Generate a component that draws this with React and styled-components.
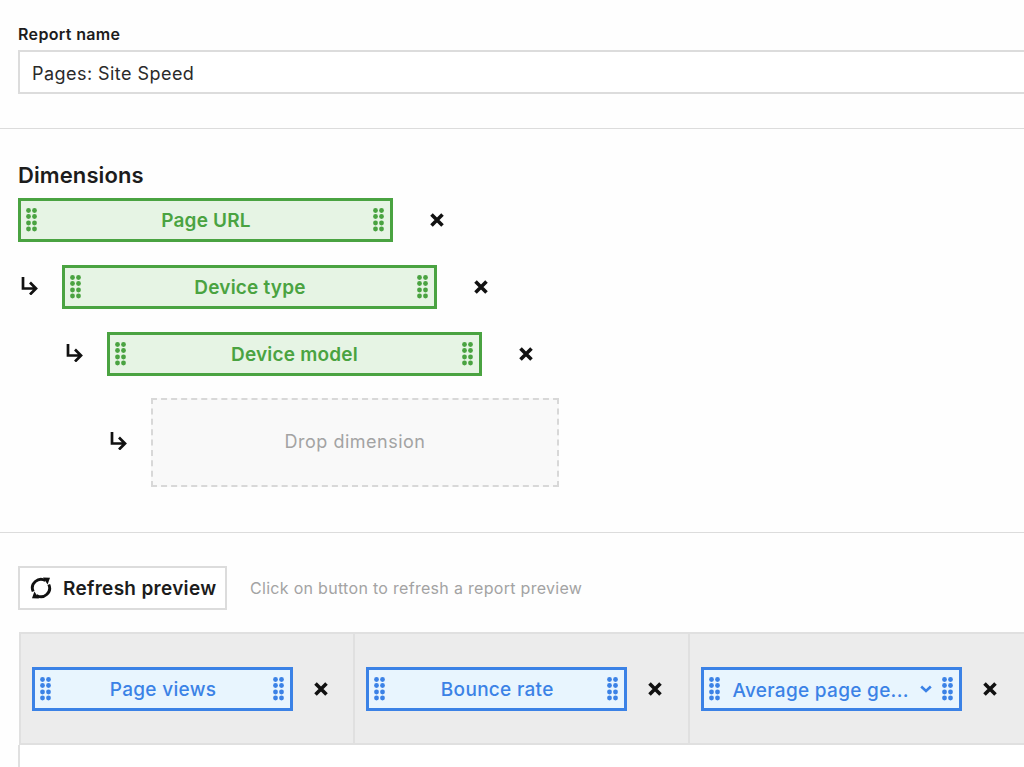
import React from 'react'
import styled, { createGlobalStyle } from 'styled-components'

const GlobalStyle = createGlobalStyle`
    html, body {
        margin: 0;
        padding: 0;
        background: #fefefe;
        overflow: hidden;
    }
    body {
        font-family: "Inter", "Liberation Sans", sans-serif;
        color: #1c1c1c;
    }
`

const Grip = ({ color }) => (
    <GripIcon width="11" height="24" viewBox="0 0 11 24" fill={color}>
        {[2.5, 8.5, 15, 21].map((y) => (
            <React.Fragment key={y}>
                <circle cx="2.5" cy={y} r="2.4" />
                <circle cx="8.5" cy={y} r="2.4" />
            </React.Fragment>
        ))}
    </GripIcon>
)

const Cross = ({ gap }) => (
    <CrossIcon gap={gap} width="16" height="16" viewBox="0 0 16 16">
        <path d="M2.5 2.5 L13.5 13.5 M13.5 2.5 L2.5 13.5" stroke="#111" strokeWidth="3.6" fill="none" />
    </CrossIcon>
)

const Arrow = () => (
    <ArrowIcon width="17" height="18" viewBox="0 0 17 18">
        <path d="M2 0 V11.5 H14 M9 5.5 L15 11.5 L9 17.5" stroke="#111" strokeWidth="2.7" fill="none" />
    </ArrowIcon>
)

const Refresh = () => (
    <svg width="22" height="22" viewBox="0 0 22 22" fill="none">
        <path d="M3.2 14.5 A8.6 8.6 0 0 1 15.5 3.6" stroke="#111" strokeWidth="2.9" />
        <path d="M18.8 7.5 A8.6 8.6 0 0 1 6.5 18.4" stroke="#111" strokeWidth="2.9" />
        <path d="M13 0.6 L20 0.8 L17.6 7.6 Z" fill="#111" />
        <path d="M9 21.4 L2 21.2 L4.4 14.4 Z" fill="#111" />
    </svg>
)

const Chevron = () => (
    <ChevronIcon width="12" height="8" viewBox="0 0 12 8">
        <path d="M1.2 1.5 L6 6 L10.8 1.5" stroke="#3b82e6" strokeWidth="2.6" fill="none" />
    </ChevronIcon>
)

function DimensionRow({ level, label }) {
    return (
        <DimRow level={level}>
            {level > 0 && <ArrowSlot><Arrow /></ArrowSlot>}
            <Chip>
                <Grip color="#4aa341" />
                <ChipLabel>{label}</ChipLabel>
                <Grip color="#4aa341" />
            </Chip>
            <Cross gap={36} />
        </DimRow>
    )
}

function MetricCell({ label, menu }) {
    return (
        <Cell>
            <MetricChip>
                <Grip color="#3b82e6" />
                <MetricLabel menu={menu}>{label}</MetricLabel>
                {menu && <Chevron />}
                <Grip color="#3b82e6" />
            </MetricChip>
            <Cross gap={20} />
        </Cell>
    )
}

export default function App() {
    return (
        <>
            <GlobalStyle />
            <Page>
                <NameSection>
                    <FieldLabel>Report name</FieldLabel>
                    <NameInput>Pages: Site Speed</NameInput>
                </NameSection>
                <DimensionSection>
                    <Heading>Dimensions</Heading>
                    <DimensionRow level={0} label="Page URL" />
                    <DimensionRow level={1} label="Device type" />
                    <DimensionRow level={2} label="Device model" />
                    <DropRow>
                        <ArrowSlot><Arrow /></ArrowSlot>
                        <DropZone>Drop dimension</DropZone>
                    </DropRow>
                </DimensionSection>
                <PreviewSection>
                    <PreviewBar>
                        <RefreshButton><Refresh />Refresh preview</RefreshButton>
                        <Hint>Click on button to refresh a report preview</Hint>
                    </PreviewBar>
                    <HeaderRow>
                        <MetricCell label="Page views" />
                        <MetricCell label="Bounce rate" />
                        <MetricCell label="Average page ge..." menu />
                    </HeaderRow>
                    <TableBody />
                </PreviewSection>
            </Page>
        </>
    )
}

const Page = styled.div`
    width: 1024px;
    height: 767px;
    overflow: hidden;
`

const NameSection = styled.div`
    height: 129px;
    box-sizing: border-box;
    padding: 25px 0 0 18px;
    border-bottom: 1px solid #dcdcdc;
`

const FieldLabel = styled.div`
    font-size: 16px;
    font-weight: 600;
    letter-spacing: 0.35px;
    line-height: 18px;
    margin-bottom: 7px;
`

const NameInput = styled.div`
    height: 44px;
    box-sizing: border-box;
    border: 2px solid #dcdcdc;
    border-right: none;
    background: #fff;
    padding-left: 12px;
    font-size: 18px;
    letter-spacing: 0.45px;
    line-height: 43px;
    color: #2a2a2a;
`

const DimensionSection = styled.div`
    height: 404px;
    box-sizing: border-box;
    padding: 33px 0 0 18px;
    border-bottom: 1px solid #dcdcdc;
`

const Heading = styled.div`
    font-size: 22px;
    font-weight: 600;
    letter-spacing: 0.1px;
    line-height: 26px;
    margin-bottom: 10px;
`

const DimRow = styled.div`
    display: flex;
    align-items: center;
    height: 44px;
    margin-bottom: 23px;
    padding-left: ${(p) => (p.level > 0 ? (p.level - 1) * 44.5 : 0)}px;
`

const ArrowSlot = styled.div`
    width: 44px;
    flex: none;
    padding-left: 3px;
    box-sizing: border-box;
    display: flex;
`

const ArrowIcon = styled.svg`
    margin-top: -3px;
`

const Chip = styled.div`
    width: 375px;
    height: 44px;
    box-sizing: border-box;
    border: 3px solid #4aa341;
    background: #e6f4e4;
    display: flex;
    align-items: center;
    padding: 0 4px 0 5px;
`

const ChipLabel = styled.div`
    flex: 1;
    text-align: center;
    color: #4aa341;
    font-size: 19px;
    font-weight: 600;
    letter-spacing: 0.2px;
`

const GripIcon = styled.svg`
    flex: none;
    margin-right: 2px;
`

const CrossIcon = styled.svg`
    flex: none;
    margin-left: ${(p) => p.gap}px;
`

const DropRow = styled.div`
    display: flex;
    align-items: center;
    margin-top: -1px;
    padding-left: 89px;
`

const DropZone = styled.div`
    width: 408px;
    height: 89px;
    box-sizing: border-box;
    border: 2px dashed #d8d8d8;
    padding-bottom: 2px;
    background: #f9f9f9;
    display: flex;
    align-items: center;
    justify-content: center;
    color: #a3a3a3;
    font-size: 18px;
    letter-spacing: 0.5px;
`

const PreviewSection = styled.div`
    padding: 33px 0 0 18px;
`

const PreviewBar = styled.div`
    display: flex;
    align-items: center;
    height: 44px;
`

const RefreshButton = styled.div`
    width: 209px;
    height: 44px;
    box-sizing: border-box;
    border: 2px solid #dcdcdc;
    background: #fff;
    display: flex;
    align-items: center;
    gap: 11px;
    padding-left: 10px;
    font-size: 19px;
    font-weight: 600;
    letter-spacing: 0.3px;
`

const Hint = styled.div`
    margin-left: 23px;
    color: #a3a3a3;
    font-size: 16px;
    letter-spacing: 0.3px;
`

const HeaderRow = styled.div`
    display: flex;
    height: 113px;
    box-sizing: border-box;
    margin-top: 22px;
    margin-left: 1px;
    background: #ececec;
    border-top: 2px solid #e0e0e0;
    border-bottom: 2px solid #e0e0e0;
`

const Cell = styled.div`
    width: 334.25px;
    flex: none;
    box-sizing: border-box;
    border-left: 2px solid #e0e0e0;
    display: flex;
    align-items: center;
    padding-left: 11px;
`

const MetricChip = styled.div`
    width: 261px;
    height: 44px;
    box-sizing: border-box;
    border: 3px solid #3b82e6;
    background: #e8f5fe;
    display: flex;
    align-items: center;
    padding: 0 4px 0 5px;
`

const MetricLabel = styled.div`
    flex: 1;
    min-width: 0;
    color: #3b82e6;
    font-size: 19px;
    font-weight: 500;
    letter-spacing: 0.3px;
    text-align: ${(p) => (p.menu ? 'left' : 'center')};
    padding-left: ${(p) => (p.menu ? '11px' : '0')};
    white-space: nowrap;
    margin-top: ${(p) => (p.menu ? '3px' : '1px')};
`

const ChevronIcon = styled.svg`
    flex: none;
    margin-right: 10px;
`

const TableBody = styled.div`
    height: 40px;
    background: #fff;
    border-left: 2px solid #e0e0e0;
`
